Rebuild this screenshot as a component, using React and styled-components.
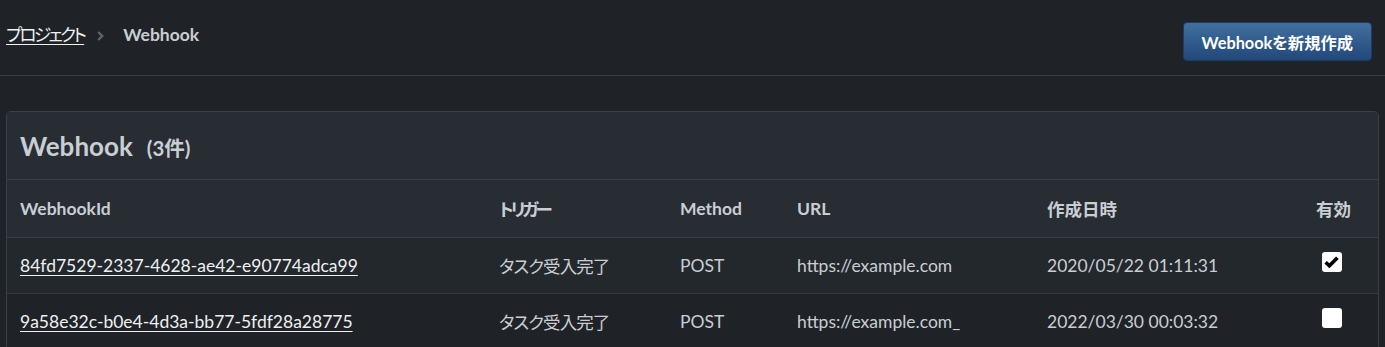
import React from "react";
import styled, { createGlobalStyle } from "styled-components";

const Global = createGlobalStyle`
  html, body { margin: 0; padding: 0; background: #1f2328; }
  body {
    font-family: Lato, "Noto Sans CJK JP", sans-serif;
    font-feature-settings: "palt";
    color: #c9ced3;
  }
`;

const Page = styled.div`
  padding: 0 8px 0 6px;
`;

const TopBar = styled.header`
  height: 76px;
  box-sizing: border-box;
  display: flex;
  align-items: flex-start;
  justify-content: space-between;
  border-bottom: 1px solid #3a3f44;
  margin: 0 -8px 0 -6px;
  padding: 0 13px 0 6px;
`;

const Crumbs = styled.nav`
  display: flex;
  align-items: center;
  padding-top: 23px;
  font-size: 17.5px;
  line-height: 24px;
`;

const CrumbLink = styled.a`
  color: #eef0f2;
  text-decoration: underline;
  text-underline-offset: 3px;
  letter-spacing: -2.6px;
`;

const Sep = styled.span`
  display: inline-flex;
  margin: 1px 19px 0 13px;
  color: #5f6468;
`;

const Current = styled.span`
  color: #c9ced3;
  font-weight: 700;
`;

const PrimaryButton = styled.button`
  margin-top: 22px;
  height: 39px;
  padding: 0 18px;
  border: 1px solid #1d3c63;
  border-radius: 4px;
  background: linear-gradient(#41709f, #21487a);
  color: #ffffff;
  font-family: Lato, "Noto Sans CJK JP", sans-serif;
  font-feature-settings: "palt";
  font-weight: 700;
  font-size: 16.3px;
`;

const Panel = styled.section`
  margin-top: 35px;
  width: 1371px;
  background: #22272c;
  border: 1px solid #3a4046;
  border-radius: 5px;
  overflow: hidden;
`;

const PanelHead = styled.div`
  height: 67px;
  display: flex;
  align-items: center;
  padding-left: 13px;
  background: #272d33;
  border-bottom: 1px solid #3a4046;
`;

const Title = styled.h2`
  margin: 0;
  font-size: 26px;
  font-weight: 700;
  color: #c9ced3;
  display: flex;
  align-items: baseline;
  gap: 14px;
`;

const Count = styled.span`
  font-size: 20.5px;
`;

const Table = styled.table`
  width: 100%;
  border-collapse: collapse;
  table-layout: fixed;
`;

const Th = styled.th`
  height: 57px;
  padding: 0 0 0 13px;
  text-align: ${(p) => (p.$center ? "center" : "left")};
  font-size: 17.5px;
  font-weight: 700;
  color: #c9ced3;
  background: #272d33;
  border-bottom: 1px solid #3a4046;
  ${(p) => (p.$center ? "padding: 0 2px 0 0;" : "")}
`;

const Tr = styled.tr`
  background: ${(p) => (p.$odd ? "#23282c" : "#1f2327")};
`;

const Td = styled.td`
  height: 55px;
  padding: 0 0 0 13px;
  font-size: 17.5px;
  color: #c9ced3;
  border-bottom: 1px solid #353a40;
  text-align: ${(p) => (p.$center ? "center" : "left")};
  ${(p) => (p.$center ? "padding: 0 6px 0 0;" : "")}
`;

const Kana = styled.span`
  letter-spacing: ${(p) => p.$tight}px;
`;

const IdLink = styled.a`
  color: #eef0f2;
  text-decoration: underline;
  text-underline-offset: 3px;
`;

const Check = styled.span`
  display: inline-flex;
  align-items: center;
  justify-content: center;
  width: 20px;
  height: 20px;
  border-radius: 3px;
  background: #ffffff;
  vertical-align: middle;
  margin-top: -12px;
`;

const rows = [
  {
    id: "84fd7529-2337-4628-ae42-e90774adca99",
    trigger: "タスク受入完了",
    method: "POST",
    url: "https://example.com",
    date: "2020/05/22 01:11:31",
    active: true,
  },
  {
    id: "9a58e32c-b0e4-4d3a-bb77-5fdf28a28775",
    trigger: "タスク受入完了",
    method: "POST",
    url: "https://example.com_",
    date: "2022/03/30 00:03:32",
    active: false,
  },
];

export default function App() {
  return (
    <>
      <Global />
      <Page>
        <TopBar>
          <Crumbs>
            <CrumbLink>プロジェクト</CrumbLink>
            <Sep>
              <svg width="7" height="10" viewBox="0 0 7 10">
                <path d="M1.2 1 L5.2 5 L1.2 9" fill="none" stroke="currentColor" strokeWidth="2.4" />
              </svg>
            </Sep>
            <Current>Webhook</Current>
          </Crumbs>
          <PrimaryButton>Webhookを新規作成</PrimaryButton>
        </TopBar>
        <Panel>
          <PanelHead>
            <Title>
              Webhook <Count>(3件)</Count>
            </Title>
          </PanelHead>
          <Table>
            <colgroup>
              <col style={{ width: 479 }} />
              <col style={{ width: 181 }} />
              <col style={{ width: 117 }} />
              <col style={{ width: 250 }} />
              <col style={{ width: 257 }} />
              <col />
            </colgroup>
            <thead>
              <tr>
                <Th>WebhookId</Th>
                <Th>
                  <Kana $tight={-3.2}>トリガー</Kana>
                </Th>
                <Th>Method</Th>
                <Th>URL</Th>
                <Th>作成日時</Th>
                <Th $center>有効</Th>
              </tr>
            </thead>
            <tbody>
              {rows.map((r, i) => (
                <Tr key={r.id} $odd={i % 2 === 0}>
                  <Td>
                    <IdLink>{r.id}</IdLink>
                  </Td>
                  <Td>
                    <Kana $tight={-0.9}>{r.trigger}</Kana>
                  </Td>
                  <Td>{r.method}</Td>
                  <Td>{r.url}</Td>
                  <Td>{r.date}</Td>
                  <Td $center>
                    <Check>
                      {r.active && (
                        <svg width="15" height="12" viewBox="0 0 15 12">
                          <path d="M1.6 6.2 L5.4 9.8 L13.4 1.8" fill="none" stroke="#000" strokeWidth="3.6" />
                        </svg>
                      )}
                    </Check>
                  </Td>
                </Tr>
              ))}
            </tbody>
          </Table>
        </Panel>
      </Page>
    </>
  );
}
